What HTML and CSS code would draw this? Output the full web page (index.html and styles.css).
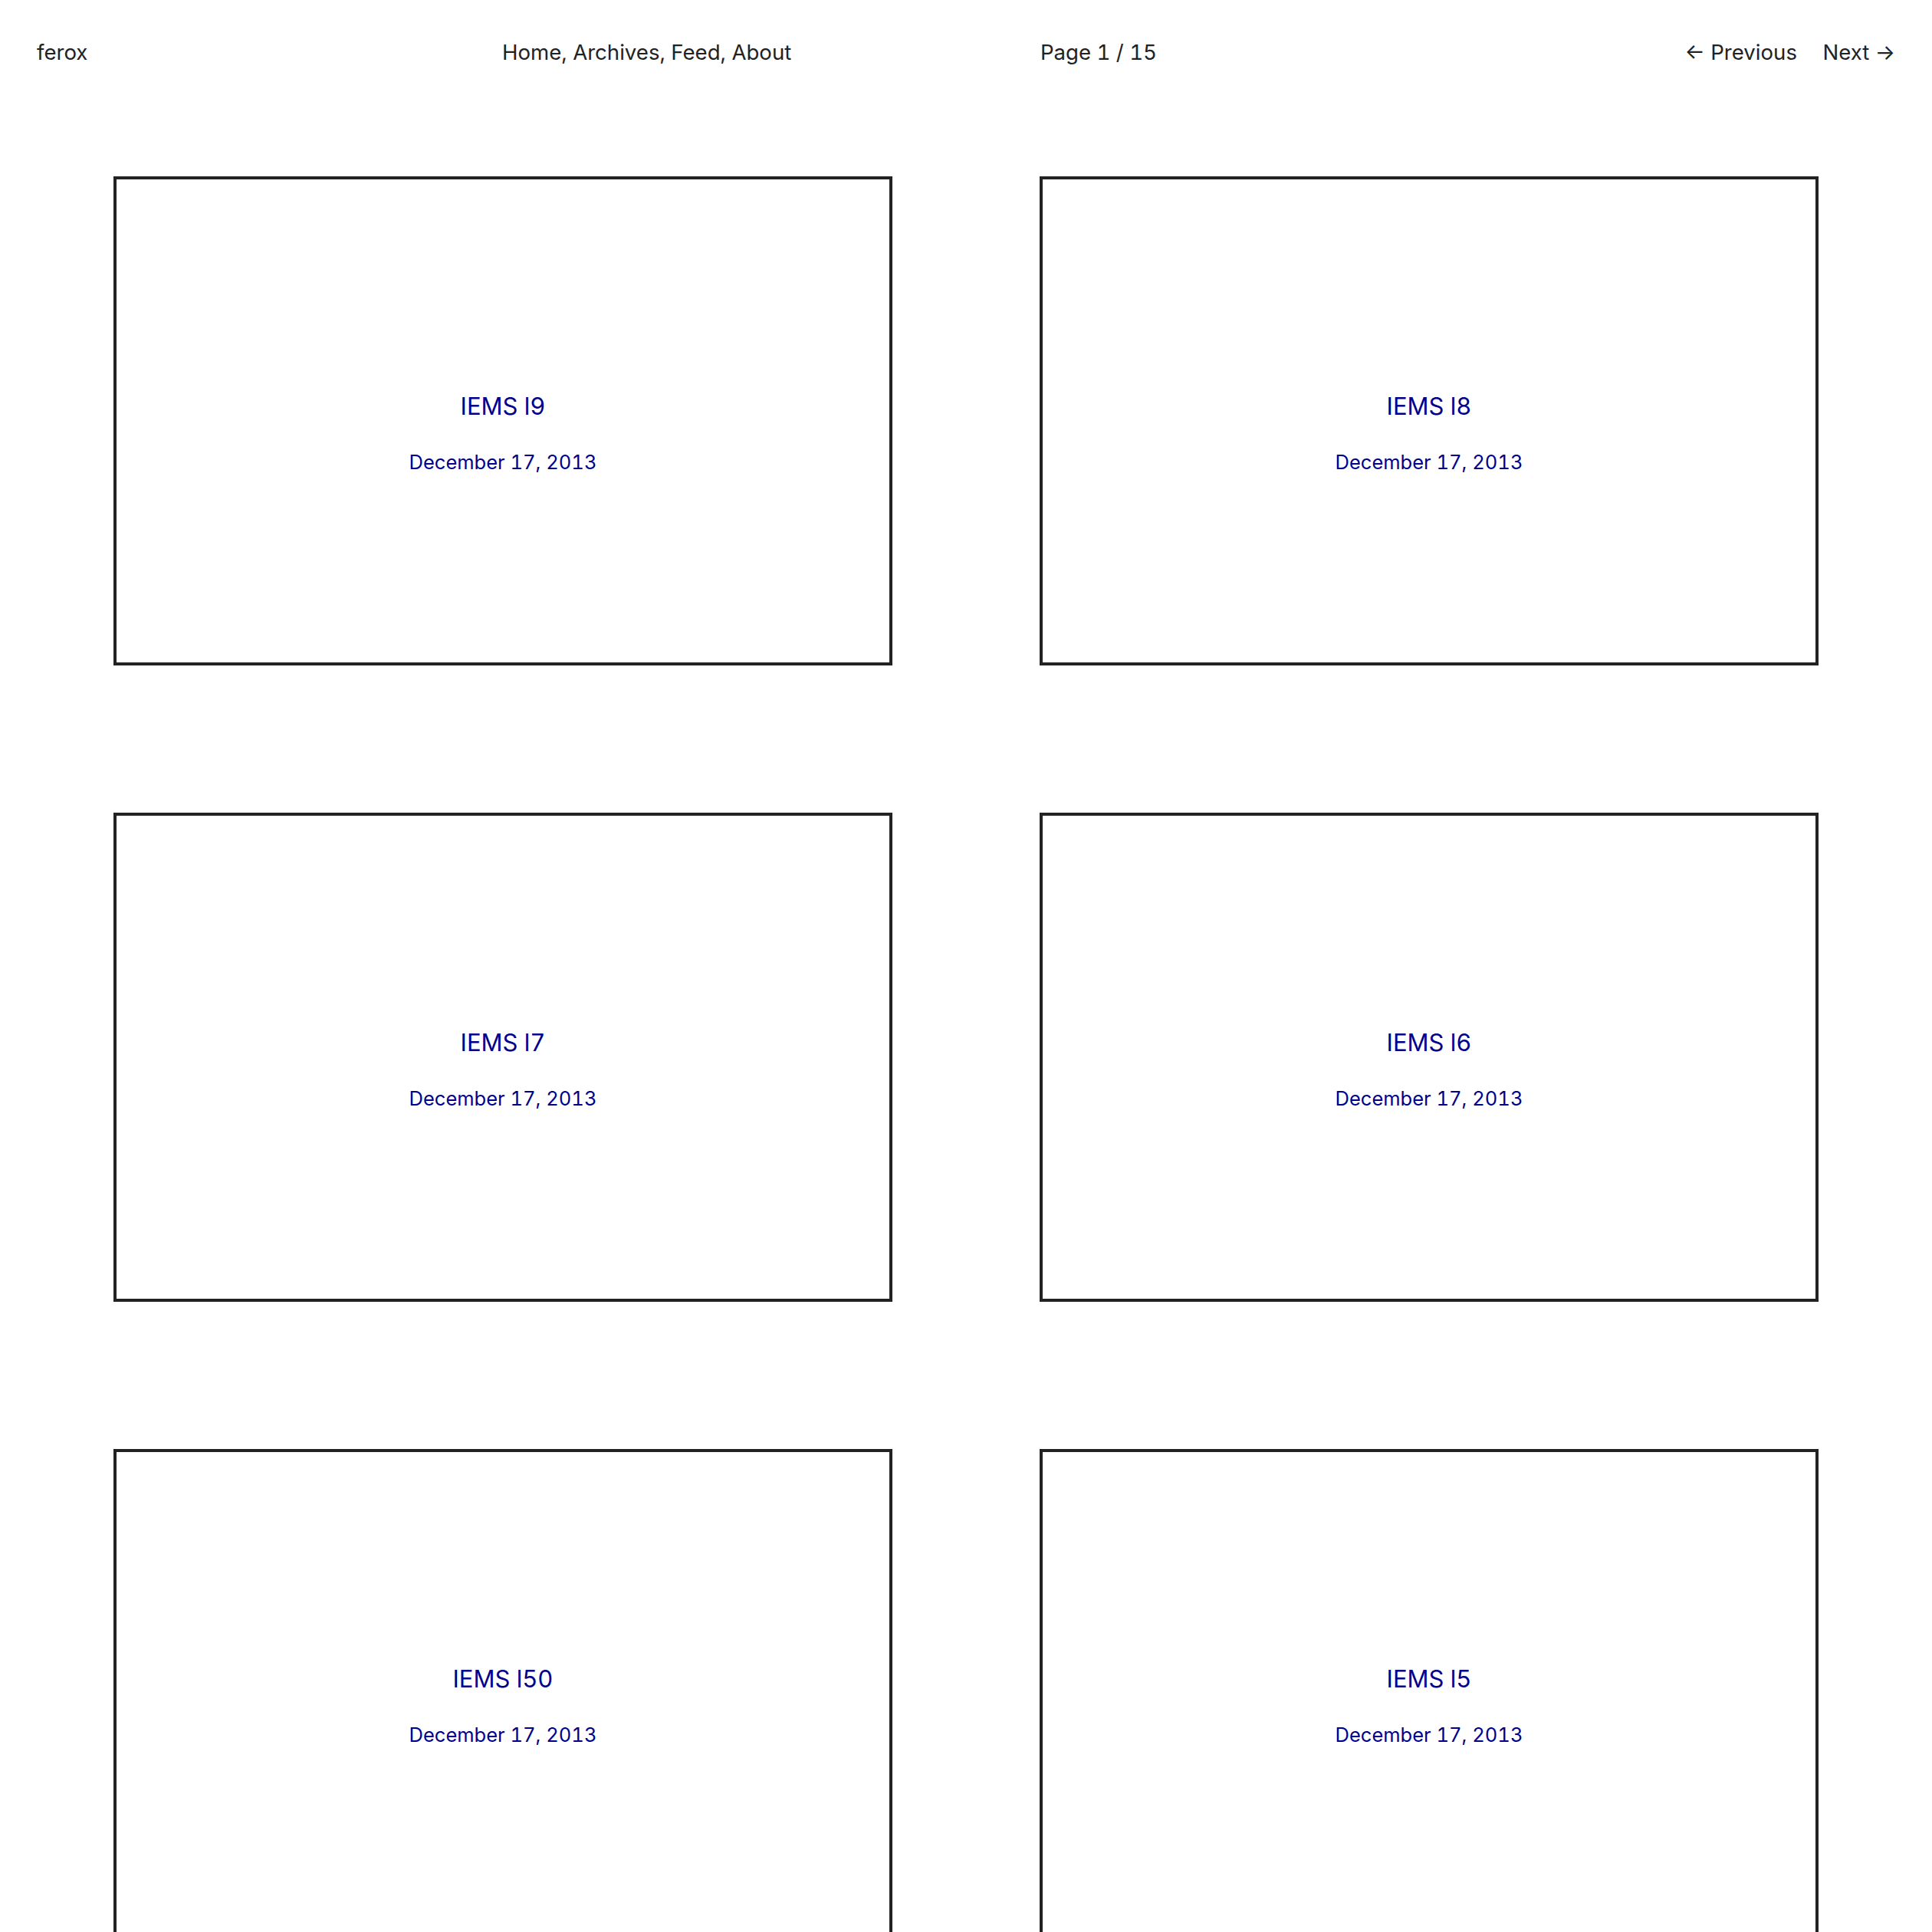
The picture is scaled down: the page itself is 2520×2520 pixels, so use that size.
FILE: index.html
```html
<!DOCTYPE html>
<html>
	<head>
		<meta charset="utf-8">
		<title>ferox</title>
		<link rel="stylesheet" href="styles.css">
	</head>
	<body>
		<header class="top">
			<a class="brand" href="#">ferox</a>
			<nav class="menu">
				<a href="#">Home</a>, <a href="#">Archives</a>, <a href="#">Feed</a>, <a href="#">About</a>
			</nav>
			<div class="page">Page 1 / 15</div>
			<div class="pager">
				<a href="#">&larr; Previous</a>
				<a href="#">Next &rarr;</a>
			</div>
		</header>
		<main class="posts">
			<a class="post" href="#">
				<span class="title">IEMS l9</span>
				<span class="date">December 17, 2013</span>
			</a>
			<a class="post" href="#">
				<span class="title">IEMS l8</span>
				<span class="date">December 17, 2013</span>
			</a>
			<a class="post" href="#">
				<span class="title">IEMS l7</span>
				<span class="date">December 17, 2013</span>
			</a>
			<a class="post" href="#">
				<span class="title">IEMS l6</span>
				<span class="date">December 17, 2013</span>
			</a>
			<a class="post" href="#">
				<span class="title">IEMS l50</span>
				<span class="date">December 17, 2013</span>
			</a>
			<a class="post" href="#">
				<span class="title">IEMS l5</span>
				<span class="date">December 17, 2013</span>
			</a>
		</main>
	</body>
</html>
```

FILE: styles.css
```css
*{
	margin: 0px;
	padding: 0px;
	box-sizing: content-box;
}
body{
	font-family: Inter, "Noto Sans", sans-serif;
	font-variant-numeric: tabular-nums;
	color: #222;
	background: #fff;
}
a{
	color: inherit;
	text-decoration: none;
}
.top{
	display: grid;
	grid-template-columns: 607px 702px 1fr auto;
	padding: 48px 48px 0 48px;
	font-size: 27.6px;
	line-height: 1.5;
}
.pager a + a{
	margin-left: 26px;
}
.posts{
	display: grid;
	grid-template-columns: 1fr 1fr;
	gap: 192px;
	padding: 141px 148px 100px 148px;
}
.post{
	border: 4px solid #222;
	aspect-ratio: 16 / 10;
	display: flex;
	flex-direction: column;
	align-items: center;
	justify-content: center;
	color: #00008b;
	text-align: center;
}
.post .title{
	margin-top: 30px;
	font-size: 31px;
	line-height: 48px;
}
.post .date{
	margin-top: 29px;
	font-size: 25.5px;
	line-height: 39px;
}
```
